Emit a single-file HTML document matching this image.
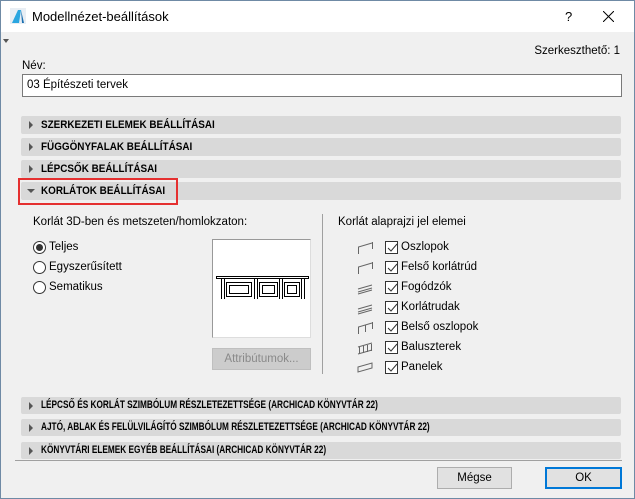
<!DOCTYPE html><html><head><style>
*{box-sizing:border-box;margin:0;padding:0}
body{width:635px;height:499px;overflow:hidden;font-family:"Liberation Sans",sans-serif;font-size:11.5px;color:#000;background:#f0f0f0}
.win{position:absolute;left:0;top:0;width:635px;height:499px;border:1px solid #6f8aa5;background:#f0f0f0}
.title{position:absolute;left:0;top:0;width:633px;height:31px;background:#fff}
.a{position:absolute}
.bar{position:absolute;left:20px;width:600px;height:18px;background:#d9d9d9;border-radius:2px;font-weight:bold;font-size:11px;line-height:18px;padding-left:20px;white-space:nowrap}
.bar span{display:inline-block;transform-origin:0 50%;transform:scaleX(0.9)}
.bar.sm span{transform:scaleX(0.75)}
.bar:before{content:"";position:absolute;left:8px;top:5px;border-left:4px solid #555;border-top:4px solid transparent;border-bottom:4px solid transparent}
.bar.open:before{left:6px;top:7px;border-top:4px solid #555;border-left:4px solid transparent;border-right:4px solid transparent;border-bottom:0}
.rad{position:absolute;left:32px;width:13px;height:13px;border:1px solid #333;border-radius:50%;background:#fff}
.cb{position:absolute;left:384px;width:13px;height:13px;border:1px solid #333;background:#fff}
.cb svg{position:absolute;left:1px;top:1px}
.t{position:absolute;font-size:11.5px;white-space:nowrap}
.btn{position:absolute;height:22px;border:1px solid #adadad;background:#e1e1e1;text-align:center;line-height:20px;font-size:11.5px}
</style></head><body><div class="win">
<div class="title">
<svg class="a" style="left:9px;top:7px" width="16" height="16"><rect x="0" y="0" width="16" height="16" fill="#e8eef4"/><path d="M2 15 L8 2 L11 2 L9 15Z" fill="#2aa6e0"/><path d="M11 2 L14 15 L12 15 Z" fill="#1a6fb0"/></svg>
<div class="t" style="left:31px;top:8px;font-size:13px">Modellnézet-beállítások</div>
<div class="t" style="left:564px;top:8px;font-size:13px">?</div>
<svg class="a" style="left:602px;top:10px" width="11" height="11"><path d="M0 0L11 11M11 0L0 11" stroke="#000" stroke-width="1"/></svg>
</div>
<div class="a" style="left:2px;top:38px;border-top:4px solid #555;border-left:3px solid transparent;border-right:3px solid transparent"></div>
<div class="t" style="right:14px;top:44px">Szerkeszthető: 1</div>
<div class="t" style="left:21px;top:59px">Név:</div>
<div class="a" style="left:21px;top:73px;width:600px;height:23px;background:#fff;border:1px solid #7a7a7a;padding:4px 0 0 4px">03 Építészeti tervek</div>
<div class="bar" style="top:115px"><span>SZERKEZETI ELEMEK BEÁLLÍTÁSAI</span></div>
<div class="bar" style="top:137px"><span>FÜGGÖNYFALAK BEÁLLÍTÁSAI</span></div>
<div class="bar" style="top:159px"><span>LÉPCSŐK BEÁLLÍTÁSAI</span></div>
<div class="bar open" style="top:181px"><span>KORLÁTOK BEÁLLÍTÁSAI</span></div>
<div class="a" style="left:17px;top:177px;width:160px;height:27px;border:2px solid #e53030"></div>
<div class="t" style="left:32px;top:215px">Korlát 3D-ben és metszeten/homlokzaton:</div>
<div class="rad" style="top:240px"><div class="a" style="left:2px;top:2px;width:7px;height:7px;border-radius:50%;background:#333"></div></div>
<div class="t" style="left:48px;top:240px">Teljes</div>
<div class="rad" style="top:260px"></div><div class="t" style="left:48px;top:260px">Egyszerűsített</div>
<div class="rad" style="top:280px"></div><div class="t" style="left:48px;top:280px">Sematikus</div>
<div class="a" style="left:211px;top:238px;width:99px;height:99px;background:#fff;border:1px solid #999;border-right-color:#ddd;border-bottom-color:#ddd">
<svg width="99" height="99"><g fill="none" stroke="#000" stroke-width="1"><rect x="3.5" y="36.5" width="92" height="2"/><path d="M8.5 38v21M11.5 38v21M41.5 38v21M44.5 38v21M66.5 38v21M69.5 38v21M88.5 38v21M91.5 38v21"/><rect x="13.5" y="42.5" width="25" height="14"/><rect x="16.5" y="45.5" width="19" height="8"/><rect x="46.5" y="42.5" width="18" height="14"/><rect x="49.5" y="45.5" width="12" height="8"/><rect x="71.5" y="42.5" width="15" height="14"/><rect x="74.5" y="45.5" width="9" height="8"/></g></svg></div>
<div class="btn" style="left:211px;top:347px;width:99px;color:#8a8a8a;background:#ccc;border-color:#bfbfbf">Attribútumok...</div>
<div class="a" style="left:321px;top:213px;width:1px;height:160px;background:#a0a0a0"></div>
<div class="t" style="left:337px;top:215px">Korlát alaprajzi jel elemei</div>
<svg class="a" style="left:355px;top:238px" width="20" height="135"><g fill="none" stroke="#666" stroke-width="1"><path d="M2.5 15V8L16 4M16.5 3v7"/><path d="M2.5 35V28L16 24M16.5 23v7"/><path d="M2 50L16 46M2 53L16 49M2 55L16 51"/><path d="M2 70L16 66M2 73L16 69M2 75L16 71"/><path d="M2.5 95V88L16 84M16.5 83v7M9.5 86v7"/><path d="M2 108L16 104M3.5 108v7M7.5 107v7M11.5 106v7M15.5 105v7M2 115L16 111"/><path d="M2 128L16 124L16 129L2 133Z"/></g></svg>
<div class="cb" style="top:240px"><svg width="11" height="11"><path d="M1 5l3 3 6-7" fill="none" stroke="#333"/></svg></div><div class="t" style="left:400px;top:240px">Oszlopok</div>
<div class="cb" style="top:260px"><svg width="11" height="11"><path d="M1 5l3 3 6-7" fill="none" stroke="#333"/></svg></div><div class="t" style="left:400px;top:260px">Felső korlátrúd</div>
<div class="cb" style="top:280px"><svg width="11" height="11"><path d="M1 5l3 3 6-7" fill="none" stroke="#333"/></svg></div><div class="t" style="left:400px;top:280px">Fogódzók</div>
<div class="cb" style="top:300px"><svg width="11" height="11"><path d="M1 5l3 3 6-7" fill="none" stroke="#333"/></svg></div><div class="t" style="left:400px;top:300px">Korlátrudak</div>
<div class="cb" style="top:320px"><svg width="11" height="11"><path d="M1 5l3 3 6-7" fill="none" stroke="#333"/></svg></div><div class="t" style="left:400px;top:320px">Belső oszlopok</div>
<div class="cb" style="top:340px"><svg width="11" height="11"><path d="M1 5l3 3 6-7" fill="none" stroke="#333"/></svg></div><div class="t" style="left:400px;top:340px">Baluszterek</div>
<div class="cb" style="top:360px"><svg width="11" height="11"><path d="M1 5l3 3 6-7" fill="none" stroke="#333"/></svg></div><div class="t" style="left:400px;top:360px">Panelek</div>
<div class="bar sm" style="top:396px;height:17px;line-height:17px"><span>LÉPCSŐ ÉS KORLÁT SZIMBÓLUM RÉSZLETEZETTSÉGE (ARCHICAD KÖNYVTÁR 22)</span></div>
<div class="bar sm" style="top:418px;height:17px;line-height:17px"><span>AJTÓ, ABLAK ÉS FELÜLVILÁGÍTÓ SZIMBÓLUM RÉSZLETEZETTSÉGE (ARCHICAD KÖNYVTÁR 22)</span></div>
<div class="bar sm" style="top:441px;height:17px;line-height:17px"><span>KÖNYVTÁRI ELEMEK EGYÉB BEÁLLÍTÁSAI (ARCHICAD KÖNYVTÁR 22)</span></div>
<div class="a" style="left:14px;top:459px;width:607px;height:1px;background:#a0a0a0"></div>
<div class="btn" style="left:436px;top:466px;width:75px">Mégse</div>
<div class="btn" style="left:544px;top:466px;width:77px;border:2px solid #0078d7;line-height:18px">OK</div>
</div></body></html>
